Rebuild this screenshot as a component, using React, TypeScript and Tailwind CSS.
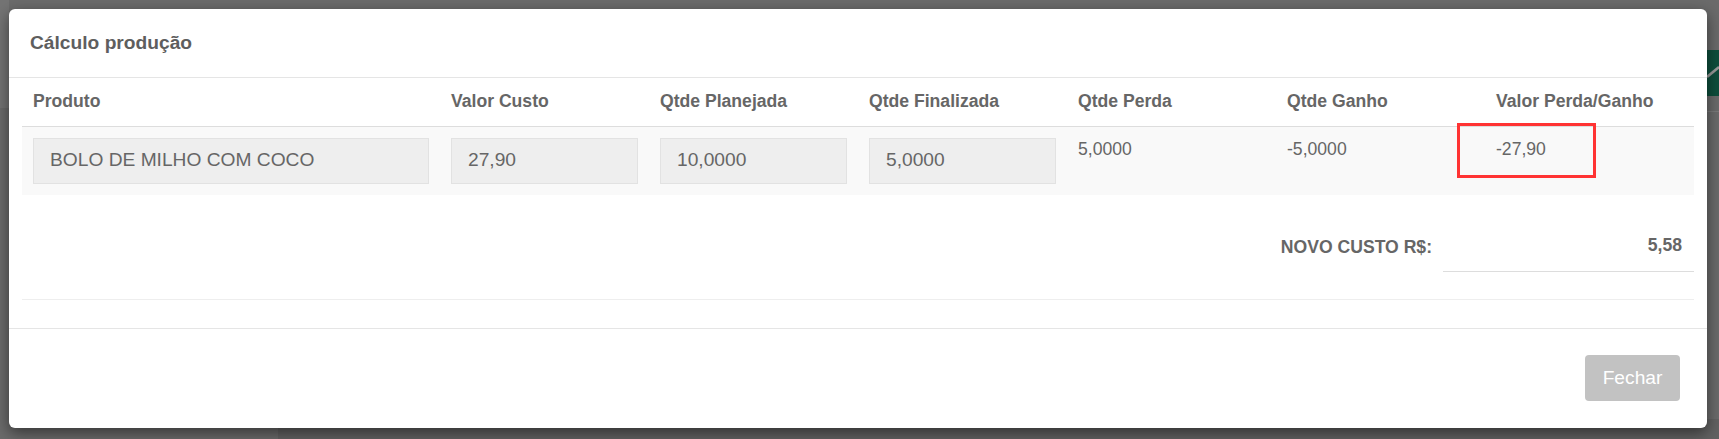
import React from 'react'

interface Column {
    label: string,
    width: string,
}

const columns: Column[] = [
    { label: 'Produto', width: 'w-[25%]' },
    { label: 'Valor Custo', width: 'w-[12.5%]' },
    { label: 'Qtde Planejada', width: 'w-[12.5%]' },
    { label: 'Qtde Finalizada', width: 'w-[12.5%]' },
    { label: 'Qtde Perda', width: 'w-[12.5%]' },
    { label: 'Qtde Ganho', width: 'w-[12.5%]' },
    { label: 'Valor Perda/Ganho', width: 'w-[12.5%]' },
]

function ReadOnlyInput({ value }: { value: string }) {
    return (
        <div className="flex h-[46px] w-full items-center border border-[#e2e2e2] bg-[#eeeeee] px-[16px] text-[19.2px] text-[#666]">
            {value}
        </div>
    )
}

export default function App() {
    return (
        <div className="relative h-[439px] w-[1719px] overflow-hidden bg-[#6b6b6b] pl-[9px] pt-[9px] font-['Liberation_Sans',Arial,sans-serif]">
            {/* page behind the overlay */}
            <div className="absolute left-0 top-0 h-[108px] w-[9px] bg-[#747474]" />
            <div className="absolute bottom-0 left-[278px] right-0 h-[20px] bg-[#626262]" />
            <div className="absolute right-0 top-[50px] h-[46px] w-[12px] bg-[#0e4e3c]">
                <svg width="12" height="46" viewBox="0 0 12 46" className="absolute left-0 top-0">
                    <path d="M0 27 L12 17" stroke="#9a9a9a" strokeWidth="2.5" fill="none" />
                </svg>
            </div>
            <div className="absolute right-0 top-[111px] h-px w-[12px] bg-[#7a7a7a]" />

            {/* Modal */}
            <div className="relative flex w-[1698px] flex-col rounded-[6px] bg-white shadow-[0_5px_15px_rgba(0,0,0,0.5)]">
                <div className="flex h-[69px] items-center border-b border-[#e5e5e5] px-[21px] text-[19.2px] font-bold text-[#5e5e5e]">
                    Cálculo produção
                </div>

                <div className="px-[13px]">
                    <table className="w-full table-fixed border-collapse">
                        <thead>
                            <tr className="border-b border-[#dddddd]">
                                {columns.map((col) => (
                                    <th
                                        key={col.label}
                                        className={`${col.width} h-[48px] px-[11px] pb-[2px] text-left align-middle text-[17.6px] font-bold leading-[22px] text-[#666]`}
                                    >
                                        {col.label}
                                    </th>
                                ))}
                            </tr>
                        </thead>
                        <tbody>
                            <tr className="bg-[#f9f9f9]">
                                <td className="px-[11px] py-[11px] align-top">
                                    <ReadOnlyInput value="BOLO DE MILHO COM COCO" />
                                </td>
                                <td className="px-[11px] py-[11px] align-top">
                                    <ReadOnlyInput value="27,90" />
                                </td>
                                <td className="px-[11px] py-[11px] align-top">
                                    <ReadOnlyInput value="10,0000" />
                                </td>
                                <td className="px-[11px] py-[11px] align-top">
                                    <ReadOnlyInput value="5,0000" />
                                </td>
                                <td className="px-[11px] py-[11px] align-top text-[17.6px] leading-[22px] text-[#666]">5,0000</td>
                                <td className="px-[11px] py-[11px] align-top text-[17.6px] leading-[22px] text-[#666]">-5,0000</td>
                                <td className="px-[11px] py-[11px] align-top text-[17.6px] leading-[22px] text-[#666]">-27,90</td>
                            </tr>
                        </tbody>
                    </table>

                    <div className="mt-[30px] flex items-center justify-end">
                        <span className="mr-[11px] pb-[2px] text-[17.6px] font-bold text-[#666]">NOVO CUSTO R$:</span>
                        <div className="flex h-[47px] w-[251px] items-center justify-end border-b border-[#dddddd] pb-[4px] pr-[12px] text-[17.6px] font-bold text-[#666]">
                            5,58
                        </div>
                    </div>

                    <div className="mb-[28px] mt-[27px] h-px bg-[#eeeeee]" />
                </div>

                <div className="flex h-[100px] items-center justify-end border-t border-[#e5e5e5] pr-[27px]">
                    <button className="h-[46px] w-[95px] rounded-[4px] bg-[#c2c2c2] text-[19.2px] text-white">
                        Fechar
                    </button>
                </div>

                {/* highlight annotation */}
                <div className="pointer-events-none absolute left-[1448px] top-[114px] h-[55px] w-[139px] border-[3px] border-[#ff3333]" />
            </div>
        </div>
    )
}
